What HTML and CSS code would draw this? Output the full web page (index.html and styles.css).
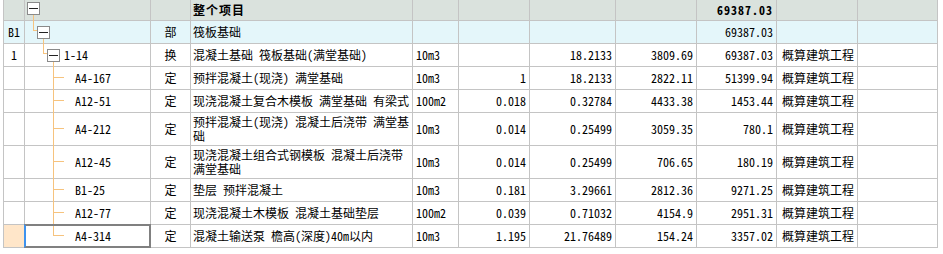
FILE: index.html
```html
<!DOCTYPE html>
<html lang="zh-CN">
<head>
<meta charset="utf-8">
<title>整个项目</title>
<link rel="stylesheet" href="styles.css">
</head>
<body>
<div class="sheet">
  <div class="row head">
    <div class="c"></div>
    <div class="c tree t-root"><span class="tb"></span></div>
    <div class="c"></div>
    <div class="c name bold">整个项目</div>
    <div class="c"></div><div class="c"></div><div class="c"></div><div class="c"></div>
    <div class="c num bold">69387.03</div>
    <div class="c"></div><div class="c"></div>
  </div>
  <div class="row cyan">
    <div class="c idx">B1</div>
    <div class="c tree t-b1"><span class="tb"></span></div>
    <div class="c ctr">部</div>
    <div class="c name">筏板基础</div>
    <div class="c"></div><div class="c"></div><div class="c"></div><div class="c"></div>
    <div class="c num">69387.03</div>
    <div class="c"></div><div class="c"></div>
  </div>
  <div class="row">
    <div class="c idx">1</div>
    <div class="c tree t-sub"><span class="tb"></span><span class="code">1-14</span></div>
    <div class="c ctr">换</div>
    <div class="c name">混凝土基础 筏板基础(满堂基础)</div>
    <div class="c unit">10m3</div>
    <div class="c num"></div>
    <div class="c num">18.2133</div>
    <div class="c num">3809.69</div>
    <div class="c num">69387.03</div>
    <div class="c cat">概算建筑工程</div>
    <div class="c"></div>
  </div>
  <div class="row">
    <div class="c idx"></div>
    <div class="c tree t-leaf"><span class="code">A4-167</span></div>
    <div class="c ctr">定</div>
    <div class="c name">预拌混凝土(现浇) 满堂基础</div>
    <div class="c unit">10m3</div>
    <div class="c num">1</div>
    <div class="c num">18.2133</div>
    <div class="c num">2822.11</div>
    <div class="c num">51399.94</div>
    <div class="c cat">概算建筑工程</div>
    <div class="c"></div>
  </div>
  <div class="row">
    <div class="c idx"></div>
    <div class="c tree t-leaf"><span class="code">A12-51</span></div>
    <div class="c ctr">定</div>
    <div class="c name">现浇混凝土复合木模板 满堂基础 有梁式</div>
    <div class="c unit">100m2</div>
    <div class="c num">0.018</div>
    <div class="c num">0.32784</div>
    <div class="c num">4433.38</div>
    <div class="c num">1453.44</div>
    <div class="c cat">概算建筑工程</div>
    <div class="c"></div>
  </div>
  <div class="row tall">
    <div class="c idx"></div>
    <div class="c tree t-leaf"><span class="code">A4-212</span></div>
    <div class="c ctr">定</div>
    <div class="c name wrap">预拌混凝土(现浇) 混凝土后浇带 满堂基础</div>
    <div class="c unit">10m3</div>
    <div class="c num">0.014</div>
    <div class="c num">0.25499</div>
    <div class="c num">3059.35</div>
    <div class="c num">780.1</div>
    <div class="c cat">概算建筑工程</div>
    <div class="c"></div>
  </div>
  <div class="row tall">
    <div class="c idx"></div>
    <div class="c tree t-leaf"><span class="code">A12-45</span></div>
    <div class="c ctr">定</div>
    <div class="c name wrap">现浇混凝土组合式钢模板 混凝土后浇带 满堂基础</div>
    <div class="c unit">10m3</div>
    <div class="c num">0.014</div>
    <div class="c num">0.25499</div>
    <div class="c num">706.65</div>
    <div class="c num">180.19</div>
    <div class="c cat">概算建筑工程</div>
    <div class="c"></div>
  </div>
  <div class="row">
    <div class="c idx"></div>
    <div class="c tree t-leaf"><span class="code">B1-25</span></div>
    <div class="c ctr">定</div>
    <div class="c name">垫层 预拌混凝土</div>
    <div class="c unit">10m3</div>
    <div class="c num">0.181</div>
    <div class="c num">3.29661</div>
    <div class="c num">2812.36</div>
    <div class="c num">9271.25</div>
    <div class="c cat">概算建筑工程</div>
    <div class="c"></div>
  </div>
  <div class="row">
    <div class="c idx"></div>
    <div class="c tree t-leaf"><span class="code">A12-77</span></div>
    <div class="c ctr">定</div>
    <div class="c name">现浇混凝土木模板 混凝土基础垫层</div>
    <div class="c unit">100m2</div>
    <div class="c num">0.039</div>
    <div class="c num">0.71032</div>
    <div class="c num">4154.9</div>
    <div class="c num">2951.31</div>
    <div class="c cat">概算建筑工程</div>
    <div class="c"></div>
  </div>
  <div class="row">
    <div class="c idx current"></div>
    <div class="c tree t-leaf last"><span class="code">A4-314</span><span class="sel"></span></div>
    <div class="c ctr">定</div>
    <div class="c name">混凝土输送泵 檐高(深度)40m以内</div>
    <div class="c unit">10m3</div>
    <div class="c num">1.195</div>
    <div class="c num">21.76489</div>
    <div class="c num">154.24</div>
    <div class="c num">3357.02</div>
    <div class="c cat">概算建筑工程</div>
    <div class="c"></div>
  </div>
</div>
</body>
</html>
```
FILE: styles.css
```css
html, body {
  margin: 0;
  padding: 0;
  background: #ffffff;
}

body {
  font-family: "Noto Sans Mono CJK SC", "Noto Sans CJK SC", monospace;
  font-size: 12px;
  color: #000;
}

.sheet {
  display: flex;
  flex-direction: column;
  gap: 1px;
  width: fit-content;
  margin-left: 3px;
  padding: 0 1px 1px 1px;
  background: #c4c4c4;
}

.row {
  display: grid;
  grid-template-columns: 20px 125px 39px 221px 45px 70px 85px 80px 79px 80px 79px;
  column-gap: 1px;
  height: 22px;
}

.row.head {
  height: 20px;
}

.row.tall {
  height: 32px;
}

.c {
  background: #ffffff;
  display: flex;
  align-items: center;
  padding: 0 3px;
  white-space: nowrap;
  line-height: 14px;
  min-width: 0;
}

.head .c {
  background: #dae2dd;
}

.cyan .c {
  background: #e4f6fa;
}

.bold {
  font-weight: bold;
  letter-spacing: 1px;
}

.idx {
  justify-content: center;
  padding: 0;
}

.idx.current {
  background: #ffe6c9;
}

.ctr {
  justify-content: center;
}

.name {
  padding: 0 2px;
}

.name.wrap {
  white-space: normal;
  word-break: break-all;
}

.unit {
  padding-left: 3px;
}

.num {
  justify-content: flex-end;
  padding-right: 3px;
}

.cat {
  padding-left: 5px;
}

/* tree column */
.tree {
  position: relative;
  padding: 0;
}

.tb {
  position: relative;
  z-index: 2;
  box-sizing: border-box;
  width: 13px;
  height: 13px;
  border: 1px solid #8a8a8a;
  background: #ffffff;
  flex: none;
}

.tb::after {
  content: "";
  position: absolute;
  left: 1px;
  right: 1px;
  top: 5px;
  height: 1px;
  background: #222;
}

.tree::before,
.tree::after {
  content: "";
  position: absolute;
  z-index: 1;
}

.t-root {
  padding-left: 2px;
  align-items: flex-start;
  padding-top: 2px;
}

.t-root::after {
  left: 8px;
  top: 15px;
  bottom: -1px;
  border-left: 1px solid #f6c37e;
}

.t-b1 {
  padding-left: 12px;
}

.t-b1::before,
.t-sub::before {
  top: 0;
  height: 9px;
  width: 3px;
  border-left: 1px solid #f6c37e;
  border-bottom: 1px solid #f6c37e;
}

.t-b1::before {
  left: 8px;
}

.t-b1::after {
  left: 18px;
  top: 17px;
  bottom: -1px;
  border-left: 1px solid #f6c37e;
}

.t-sub {
  padding-left: 22px;
}

.t-sub::before {
  left: 18px;
}

.t-sub::after {
  left: 28px;
  top: 17px;
  bottom: -1px;
  border-left: 1px solid #f6c37e;
}

.t-sub .code {
  margin-left: 4px;
}

.t-leaf {
  padding-left: 50px;
}

.t-leaf::before {
  left: 28px;
  top: -1px;
  bottom: -1px;
  border-left: 1px solid #f6c37e;
}

.t-leaf.last::before {
  bottom: auto;
  height: calc(50% - 0px);
}

.t-leaf::after {
  left: 28px;
  top: calc(50% - 1px);
  width: 11px;
  border-top: 1px solid #f6c37e;
}

.sel {
  position: absolute;
  z-index: 3;
  left: -1px;
  right: -1px;
  top: -1px;
  bottom: -1px;
  border: 2px solid #808080;
  border-left-color: #3d92ee;
}
```
